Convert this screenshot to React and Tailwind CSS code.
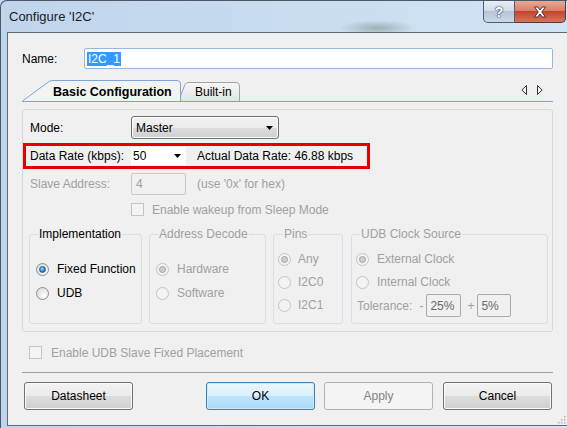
import React from 'react';

const Radio = ({ checked, disabled }) => (
  <span
    className={
      disabled
        ? 'flex h-[13px] w-[13px] shrink-0 items-center justify-center rounded-full border border-[#c4c4c4] bg-[#f3f3f3]'
        : 'flex h-[13px] w-[13px] shrink-0 items-center justify-center rounded-full border border-[#8e8f8f] bg-[radial-gradient(circle_at_65%_70%,#ffffff,#d2d2d2)]'
    }
  >
    {checked && (
      <span
        className={
          disabled
            ? 'h-[7px] w-[7px] rounded-full border border-[#a3a3a3] bg-[#cdcdcd]'
            : 'h-[7px] w-[7px] rounded-full border border-[#245f95] bg-[radial-gradient(circle_at_40%_35%,#a6dcff,#2a86d0_55%,#0d4f8f)]'
        }
      />
    )}
  </span>
);

const Check = () => (
  <span className="h-[13px] w-[13px] shrink-0 border border-[#c4c4c4] bg-[#f4f4f4]" />
);

const Arrow = () => (
  <svg width="7" height="4" viewBox="0 0 7 4">
    <path d="M0 0h7L3.5 4z" fill="#000" />
  </svg>
);

const RadioRow = ({ label, checked, disabled, gap = 'ml-[8px]' }) => (
  <div className="flex h-[16px] items-center">
    <Radio checked={checked} disabled={disabled} />
    <span className={`${gap} ${disabled ? 'text-[#a0a0a0]' : 'text-black'}`}>{label}</span>
  </div>
);

const btn =
  'flex h-[28px] w-[109px] items-center justify-center rounded-[3px] border border-[#707070] bg-[linear-gradient(#f2f2f2,#ebebeb_50%,#dddddd_50%,#cfcfcf)] shadow-[inset_0_0_0_1px_#fbfbfb]';

export default function App() {
  return (
    <div className="relative h-[428px] w-[567px] overflow-hidden bg-[#c2d6ec] font-['Liberation_Sans',Arial,sans-serif] text-[12px] leading-[14px] text-black">
      <div className="flex h-full flex-col rounded-tl-[7px] border-l border-t border-[#4a5868] bg-[radial-gradient(ellipse_38px_8px_at_376px_27px,rgba(70,95,60,0.35),transparent),linear-gradient(to_right,#bfd5ec,#d2e3f4)]">
        {/* title bar */}
        <div className="flex h-[31px] shrink-0">
          <div className="pl-[8px] pt-[8px] text-[13px] leading-[16px] text-[#1b1b1b]">Configure 'I2C'</div>
          <div className="ml-auto mr-[1px] flex h-[22px]">
            <div className="flex w-[32px] items-center justify-center rounded-bl-[5px] border border-t-0 border-[#4f5f70] bg-[linear-gradient(#e6edf5,#d3deea_45%,#b6c6d8_50%,#cad8e7)] text-[14px] font-bold text-white [text-shadow:0_0_2px_#1c2733,0_0_1px_#1c2733]">
              ?
            </div>
            <div className="flex w-[51px] items-center justify-center rounded-br-[5px] border border-l-0 border-t-0 border-[#4f3a3a] bg-[linear-gradient(#e9a896,#d98069_45%,#c2452c_50%,#d4745b)]">
              <svg width="14" height="12" viewBox="0 0 14 12">
                <path
                  d="M1.5 1h3.2L7 4l2.3-3h3.2L8.7 6l3.8 5H9.3L7 8 4.7 11H1.5l3.8-5z"
                  fill="#fff"
                  stroke="#3b2020"
                  strokeWidth="0.9"
                  strokeLinejoin="round"
                />
              </svg>
            </div>
          </div>
        </div>

        {/* frame + client */}
        <div className="flex flex-1 pb-[2px] pl-[6px]">
          <div className="relative flex flex-1 flex-col border-b border-l border-t border-[#5c6a79] bg-[#f0f0f0] px-[14px] pt-[15px]">
            {/* name */}
            <div className="flex h-[21px] items-center">
              <span className="w-[62px]">Name:</span>
              <div className="flex h-[21px] flex-1 items-center rounded-[2px] border border-[#98b7de] bg-white pl-[2px]">
                <span className="bg-[#3399ff] px-[1px] text-white">I2C_1</span>
              </div>
            </div>

            {/* tabs */}
            <div className="mt-[11px] flex h-[22px] items-end border-b border-[#7ba5d7]">
              <div className="relative z-10 h-[21px] w-[159px]">
                <svg className="absolute inset-0" width="159" height="21" viewBox="0 0 159 21">
                  <path
                    d="M0.5 21 L25 3 Q27.5 0.5 31 0.5 L155 0.5 Q158.5 0.5 158.5 4 L158.5 21"
                    fill="#f3f3f3"
                    stroke="#7ba5d7"
                  />
                </svg>
                <div className="relative pl-[31px] pt-[4px] text-[12.5px] font-bold leading-[16px]">Basic Configuration</div>
              </div>
              <div className="relative ml-[-3px] h-[19px] w-[62px]">
                <svg className="absolute inset-0" width="62" height="19" viewBox="0 0 62 19">
                  <defs>
                    <linearGradient id="bt" x1="0" y1="0" x2="0" y2="1">
                      <stop offset="0" stopColor="#f7f7f7" />
                      <stop offset="1" stopColor="#e3e3e3" />
                    </linearGradient>
                  </defs>
                  <path
                    d="M0.5 19 L7 2.5 Q8 0.5 11 0.5 L58 0.5 Q61.5 0.5 61.5 4 L61.5 19"
                    fill="url(#bt)"
                    stroke="#a2a2a2"
                  />
                </svg>
                <div className="relative pl-[17px] pt-[2px] leading-[16px]">Built-in</div>
              </div>
              <div className="mb-[6px] ml-auto mr-[10px]">
                <svg width="22" height="10" viewBox="0 0 22 10">
                  <path d="M5.5 0.5 L0.8 5 L5.5 9.5 Z" fill="none" stroke="#333" />
                  <path d="M16.5 0.5 L21.2 5 L16.5 9.5 Z" fill="none" stroke="#333" />
                </svg>
              </div>
            </div>

            {/* tab page */}
            <div className="mt-[7px] flex h-[223px] flex-col rounded-[3px] border border-[#d9d9d9]">
              <div className="mt-[6px] flex h-[23px] items-center pl-[7px]">
                <span className="w-[101px]">Mode:</span>
                <div className="flex h-[23px] w-[148px] items-center justify-between rounded-[3px] border border-[#707070] bg-[linear-gradient(#f2f2f2,#ebebeb_50%,#dddddd_50%,#cfcfcf)] pl-[4px] pr-[5px] shadow-[inset_0_0_0_1px_#fbfbfb]">
                  <span>Master</span>
                  <Arrow />
                </div>
              </div>

              <div className="mt-[4px] flex h-[26px] w-[347px] items-center border-[3px] border-[#e60000] pl-[4px]">
                <span className="w-[101px]">Data Rate (kbps):</span>
                <div className="flex h-[18px] w-[55px] items-center justify-between bg-white pl-[2px] pr-[5px]">
                  <span>50</span>
                  <Arrow />
                </div>
                <span className="ml-[11px]">Actual Data Rate: 46.88 kbps</span>
              </div>

              <div className="mt-[4px] flex h-[22px] items-center pl-[7px] text-[#a0a0a0]">
                <span className="w-[101px]">Slave Address:</span>
                <div className="flex h-[22px] w-[55px] items-center rounded-[2px] border border-[#c9c9c9] pl-[4px]">4</div>
                <span className="ml-[11px]">(use '0x' for hex)</span>
              </div>

              <div className="mt-[8px] flex h-[13px] items-center pl-[108px] text-[#a0a0a0]">
                <Check />
                <span className="ml-[8px]">Enable wakeup from Sleep Mode</span>
              </div>

              <div className="mt-[11px] flex pl-[6px]">
                <fieldset className="h-[97px] w-[113px] rounded-[3px] border border-[#d5dfe5]">
                  <legend className="ml-[8px] px-[1px] leading-[14px]">Implementation</legend>
                  <div className="flex flex-col gap-[8px] pl-[6px] pt-[20px]">
                    <RadioRow label="Fixed Function" checked />
                    <RadioRow label="UDB" />
                  </div>
                </fieldset>
                <fieldset className="ml-[7px] h-[97px] w-[117px] rounded-[3px] border border-[#d5dfe5]">
                  <legend className="ml-[8px] px-[1px] leading-[14px] text-[#a0a0a0]">Address Decode</legend>
                  <div className="flex flex-col gap-[8px] pl-[6px] pt-[20px]">
                    <RadioRow label="Hardware" checked disabled />
                    <RadioRow label="Software" disabled />
                  </div>
                </fieldset>
                <fieldset className="ml-[7px] h-[97px] w-[70px] rounded-[3px] border border-[#d5dfe5]">
                  <legend className="ml-[9px] px-[1px] leading-[14px] text-[#a0a0a0]">Pins</legend>
                  <div className="flex flex-col gap-[7px] pl-[4px] pt-[10px]">
                    <RadioRow label="Any" checked disabled gap="ml-[7px]" />
                    <RadioRow label="I2C0" disabled gap="ml-[7px]" />
                    <RadioRow label="I2C1" disabled gap="ml-[7px]" />
                  </div>
                </fieldset>
                <fieldset className="ml-[8px] h-[97px] w-[197px] rounded-[3px] border border-[#d5dfe5]">
                  <legend className="ml-[8px] px-[1px] leading-[14px] text-[#a0a0a0]">UDB Clock Source</legend>
                  <div className="flex flex-col pl-[4px] pt-[10px]">
                    <RadioRow label="External Clock" checked disabled />
                    <div className="mt-[7px]">
                      <RadioRow label="Internal Clock" disabled />
                    </div>
                    <div className="mt-[4px] flex h-[23px] items-center pl-[1px] text-[#a0a0a0]">
                      <span>Tolerance:</span>
                      <span className="ml-[7px]">-</span>
                      <div className="ml-[3px] flex h-[23px] w-[35px] items-center rounded-[2px] border border-[#a9a9a9] pl-[3px] text-[#6a6a6a]">25%</div>
                      <span className="ml-[6px]">+</span>
                      <div className="ml-[3px] flex h-[23px] w-[34px] items-center rounded-[2px] border border-[#a9a9a9] pl-[3px] text-[#6a6a6a]">5%</div>
                    </div>
                  </div>
                </fieldset>
              </div>
            </div>

            <div className="mt-[14px] flex h-[13px] items-center pl-[7px] text-[#a0a0a0]">
              <Check />
              <span className="ml-[9px]">Enable UDB Slave Fixed Placement</span>
            </div>

            <div className="mt-[13px] h-px bg-[#a0a0a0]" />

            <div className="mt-[9px] flex">
              <div className={`${btn} ml-[2px]`}>Datasheet</div>
              <div className="ml-[73px] flex h-[28px] w-[109px] items-center justify-center rounded-[3px] border border-[#3c7fb1] bg-[linear-gradient(#eaf6fd,#d9f0fc_50%,#bee6fd_50%,#a7d9f5)] shadow-[inset_0_0_0_1px_#c8ecfd]">
                OK
              </div>
              <div className="ml-[9px] flex h-[28px] w-[109px] items-center justify-center rounded-[3px] border border-[#adb2b5] bg-[#f4f4f4] text-[#838383]">
                Apply
              </div>
              <div className={`${btn} ml-[10px]`}>Cancel</div>
            </div>

            <svg className="absolute bottom-[1px] right-[1px]" width="8" height="8" viewBox="0 0 8 8">
              <g fill="#b5b5b5">
                <rect x="6" y="0" width="1.5" height="1.5" />
                <rect x="3" y="3" width="1.5" height="1.5" />
                <rect x="6" y="3" width="1.5" height="1.5" />
                <rect x="0" y="6" width="1.5" height="1.5" />
                <rect x="3" y="6" width="1.5" height="1.5" />
                <rect x="6" y="6" width="1.5" height="1.5" />
              </g>
            </svg>
          </div>
        </div>
      </div>
    </div>
  );
}
